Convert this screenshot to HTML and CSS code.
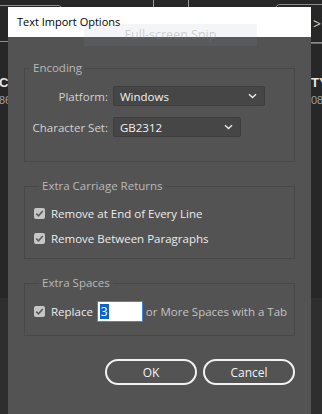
FILE: index.html
```html
<!DOCTYPE html>
<html lang="en">
<head>
    <meta charset="UTF-8">
    <meta name="viewport" content="width=device-width, initial-scale=1.0">
    <title>Text Import Options</title>
    <link rel="stylesheet" href="styles.css">
</head>
<body>

    <div class="desktop">
        <!-- Bits of the app behind the dialog -->
        <div class="bg-box bg-box-left"></div>
        <div class="bg-line bg-line-a"></div>
        <div class="bg-line bg-line-b"></div>
        <div class="bg-box bg-box-right"><span class="bg-arrow">&gt;</span></div>
        <div class="bg-rule"></div>
        <div class="bg-text bg-text-left">C<br><small>86</small></div>
        <div class="bg-text bg-text-right">TY<br><small>08</small></div>
        <div class="bg-lower"></div>

        <div class="dialog">
            <div class="titlebar">Text Import Options</div>

            <div class="content">
                <fieldset class="group group-encoding">
                    <legend>Encoding</legend>
                    <div class="field-grid">
                        <label class="field-label">Platform:</label>
                        <div class="select select-wide">
                            <span>Windows</span>
                            <svg width="9" height="6" viewBox="0 0 9 6"><path d="M1 1.2 L4.5 4.6 L8 1.2" fill="none" stroke="#e8e8e8" stroke-width="1.4"/></svg>
                        </div>
                        <label class="field-label">Character Set:</label>
                        <div class="select select-narrow">
                            <span>GB2312</span>
                            <svg width="9" height="6" viewBox="0 0 9 6"><path d="M1 1.2 L4.5 4.6 L8 1.2" fill="none" stroke="#e8e8e8" stroke-width="1.4"/></svg>
                        </div>
                    </div>
                </fieldset>

                <fieldset class="group group-returns">
                    <legend>Extra Carriage Returns</legend>
                    <div class="check-row">
                        <span class="checkbox"><svg width="11" height="11" viewBox="0 0 11 11"><path d="M2.3 5.6 L4.5 7.8 L8.8 3" fill="none" stroke="#5a5a5a" stroke-width="1.6"/></svg></span>
                        <span>Remove at End of Every Line</span>
                    </div>
                    <div class="check-row">
                        <span class="checkbox"><svg width="11" height="11" viewBox="0 0 11 11"><path d="M2.3 5.6 L4.5 7.8 L8.8 3" fill="none" stroke="#5a5a5a" stroke-width="1.6"/></svg></span>
                        <span>Remove Between Paragraphs</span>
                    </div>
                </fieldset>

                <fieldset class="group group-spaces">
                    <legend>Extra Spaces</legend>
                    <div class="check-row">
                        <span class="checkbox"><svg width="11" height="11" viewBox="0 0 11 11"><path d="M2.3 5.6 L4.5 7.8 L8.8 3" fill="none" stroke="#5a5a5a" stroke-width="1.6"/></svg></span>
                        <span>Replace</span>
                        <div class="num-input"><span class="selected">3</span></div>
                        <span class="muted">or More Spaces with a Tab</span>
                    </div>
                </fieldset>

                <div class="actions">
                    <button class="btn">OK</button>
                    <button class="btn">Cancel</button>
                </div>
            </div>
        </div>

        <!-- Snipping tool tooltip floating over everything -->
        <div class="snip-tip">Full-screen Snip</div>
    </div>

</body>
</html>
```

FILE: styles.css
```css
body {
    margin: 0;
    padding: 0;
    background-color: #272727;
    font-family: "Open Sans", "Noto Sans", sans-serif;
    font-size: 11.5px;
    overflow: hidden;
}
.desktop {
    position: relative;
    width: 322px;
    height: 414px;
    overflow: hidden;
}

/* background app */
.bg-box {
    position: absolute;
    border: 1px solid #8c8c8c;
    border-radius: 5px;
}
.bg-box-left {
    left: -50px;
    top: 5px;
    width: 111px;
    height: 35px;
}
.bg-box-right {
    left: 275px;
    top: 4px;
    width: 80px;
    height: 37px;
}
.bg-arrow {
    position: absolute;
    left: 37px;
    top: 9px;
    color: #cfcfcf;
    font-size: 14px;
}
.bg-line {
    position: absolute;
    top: 0;
    width: 1px;
    height: 8px;
    background-color: #9a9a9a;
}
.bg-line-a {
    left: 153px;
}
.bg-line-b {
    left: 188px;
}
.bg-rule {
    position: absolute;
    left: 300px;
    top: 43px;
    width: 22px;
    height: 1px;
    background-color: #6a6a6a;
}
.bg-text {
    position: absolute;
    top: 74px;
    color: #e6e6e6;
    font-family: "Liberation Sans", sans-serif;
    font-size: 13px;
    font-weight: bold;
    line-height: 17px;
}
.bg-text small {
    font-size: 11px;
    font-weight: normal;
    color: #a0a0a0;
}
.bg-text-left {
    left: -1px;
}
.bg-text-right {
    left: 311px;
}
.bg-lower {
    position: absolute;
    left: 0;
    top: 298px;
    width: 322px;
    height: 116px;
    background-color: #2e2e2e;
}

/* dialog */
.dialog {
    position: relative;
    z-index: 1;
    margin: 7px 0 0 8px;
    width: 303px;
    height: 407px;
    background-color: #535353;
}
.titlebar {
    height: 30px;
    line-height: 30px;
    padding-left: 9px;
    background-color: #ffffff;
    color: #000000;
    font-size: 11px;
}
.content {
    padding: 23px 16px 0 16px;
}
.group {
    margin: 0;
    min-width: 0;
    border: 1px solid #484848;
    padding: 0;
}
.group legend {
    margin-left: 5px;
    padding: 0 3px;
    line-height: 16px;
    color: #b9b9b9;
}
.group-encoding {
    padding: 10px 0 24px 0;
}
.group-returns {
    margin-top: 16px;
    padding: 11px 0 12px 9px;
}
.group-spaces {
    margin-top: 16px;
    padding: 10px 0 13px 9px;
}

.field-grid {
    display: grid;
    grid-template-columns: 83px auto;
    column-gap: 5px;
    row-gap: 11px;
    align-items: center;
}
.field-label {
    text-align: right;
    color: #d2d2d2;
}
.select {
    display: flex;
    align-items: center;
    justify-content: space-between;
    box-sizing: border-box;
    height: 20px;
    padding: 0 7px 0 6px;
    background-color: #464646;
    border: 1px solid #3e3e3e;
    border-radius: 2px;
    color: #f2f2f2;
}
.select-wide {
    width: 152px;
}
.select-narrow {
    width: 128px;
}

.check-row {
    display: flex;
    align-items: center;
    gap: 6px;
    height: 16px;
    color: #ececec;
}
.check-row + .check-row {
    margin-top: 9px;
}
.group-spaces .check-row {
    height: 21px;
}
.checkbox {
    display: flex;
    width: 11px;
    height: 11px;
    background-color: #c6c6c6;
    border-radius: 2px;
}
.num-input {
    box-sizing: border-box;
    width: 46px;
    height: 21px;
    margin-left: -2px;
    padding: 2px 0 0 2px;
    background-color: #ffffff;
    border: 1px solid #3d8ad8;
    line-height: 15px;
    font-size: 12px;
    color: #000000;
}
.selected {
    display: inline-block;
    background-color: #0a64c9;
    color: #ffffff;
    padding: 0 1px;
}
.muted {
    margin-left: -3px;
    color: #c3c3c3;
}

.actions {
    display: flex;
    justify-content: flex-end;
    gap: 6px;
    margin-top: 23px;
}
.btn {
    width: 92px;
    height: 26px;
    border: 2px solid #f2f2f2;
    border-radius: 13px;
    background-color: transparent;
    color: #f2f2f2;
    font-family: "Open Sans", "Noto Sans", sans-serif;
    font-size: 12px;
}

.snip-tip {
    position: absolute;
    z-index: 2;
    left: 84px;
    top: 24px;
    width: 173px;
    height: 22px;
    line-height: 22px;
    text-align: center;
    background-color: rgba(140, 160, 185, 0.1);
    color: rgba(128, 128, 128, 0.35);
    font-size: 12.5px;
}
```
